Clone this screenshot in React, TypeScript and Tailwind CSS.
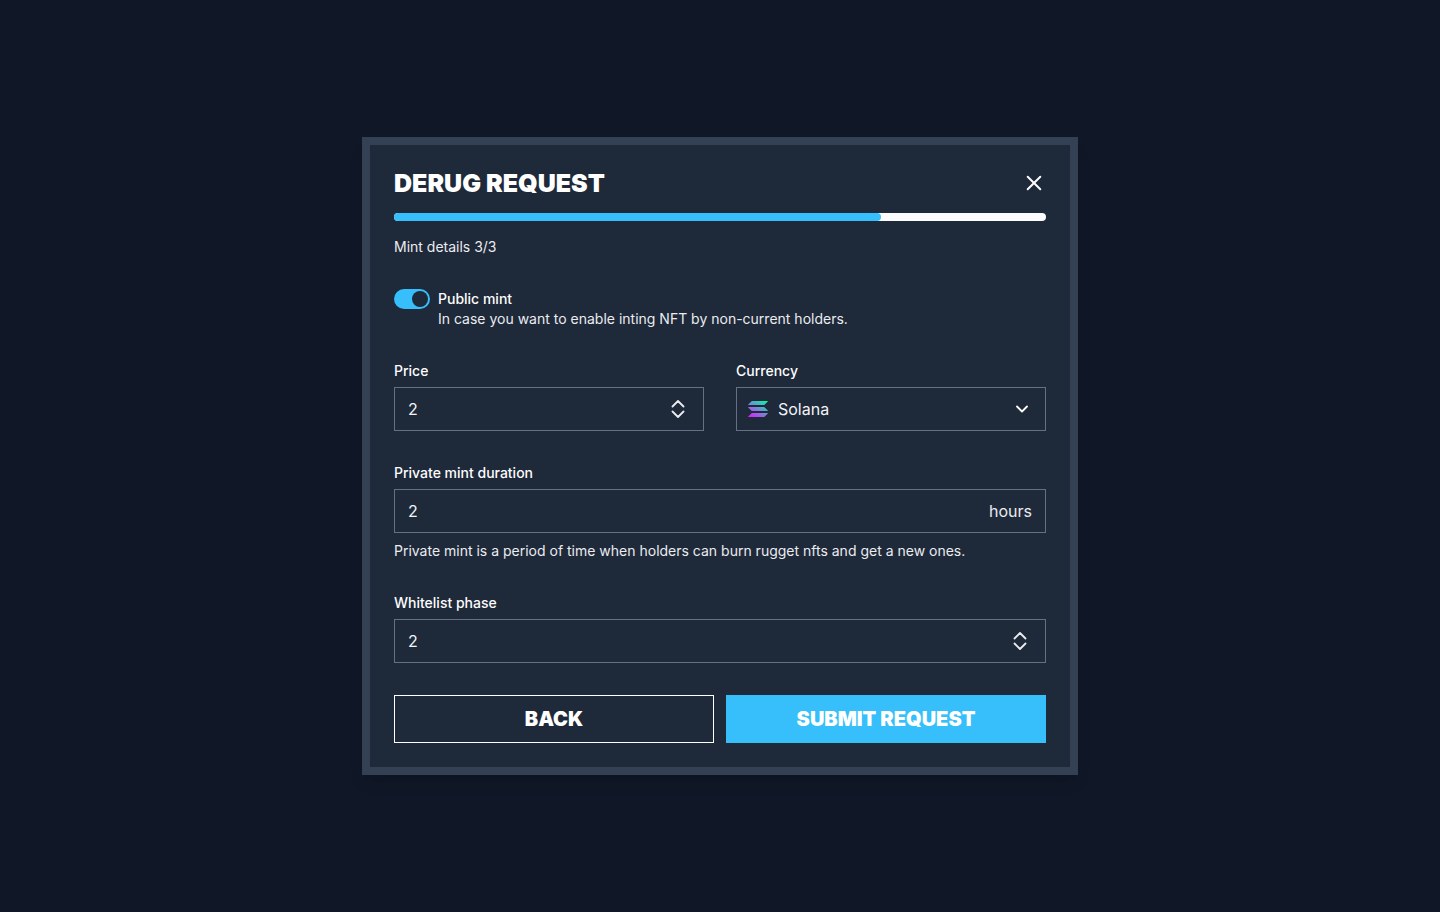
import { useState } from "react"
import type { ReactNode } from "react"
import clsx from "clsx"

function CloseIcon() {
    return (
        <svg width="16" height="16" viewBox="0 0 16 16" fill="none" stroke="currentColor" strokeWidth="2" strokeLinecap="round">
            <path d="M1.700 1.700 14.300 14.300M14.300 1.700 1.700 14.300" />
        </svg>
    )
}

function StepIcon({ up }: { up?: boolean }) {
    return (
        <svg className="block" width="14" height="8" viewBox="0 0 14 8" fill="none" stroke="currentColor" strokeWidth="1.8" strokeLinecap="round" strokeLinejoin="round">
            <path d={up ? "M1.500 6.500 7 1 12.500 6.500" : "M1.500 1.500 7 7 12.500 1.500"} />
        </svg>
    )
}

function ChevronDownIcon() {
    return (
        <svg className="pointer-events-none mr-0.5 shrink-0" width="20" height="20" viewBox="0 0 20 20" fill="none" stroke="currentColor" strokeWidth="1.8" strokeLinecap="round" strokeLinejoin="round">
            <path d="m5 7.500 5 5 5-5" />
        </svg>
    )
}

function SolanaIcon() {
    return (
        <svg className="shrink-0" width="20" height="16" viewBox="0 0 20 16">
            <defs>
                <linearGradient id="solana" gradientUnits="userSpaceOnUse" x1="17" y1="-2" x2="5" y2="18">
                    <stop offset="0" stopColor="#00ffa3" />
                    <stop offset="1" stopColor="#dc1fff" />
                </linearGradient>
            </defs>
            <g fill="url(#solana)">
                <path d="M3.600.2Q3.800 0 4.100 0H19.600Q20.200 0 19.800.4L16.500 3.800Q16.300 4 16 4H.4Q-.2 4 .2 3.600Z" />
                <path d="M16.500 6.200Q16.300 6 16 6H.4Q-.2 6 .2 6.400L3.500 9.800Q3.700 10 4 10H19.600Q20.200 10 19.800 9.600Z" />
                <path d="M3.600 12.200Q3.800 12 4.100 12H19.600Q20.200 12 19.800 12.400L16.500 15.800Q16.300 16 16 16H.4Q-.2 16 .2 15.600Z" />
            </g>
        </svg>
    )
}

interface FieldProps {
    id: string,
    label: string,
    hint?: string,
    children: ReactNode
}

function Field({ id, label, hint, children }: FieldProps) {
    return (
        <div className="flex flex-1 flex-col">
            <label htmlFor={id} className="mb-1.5 text-sm font-medium">{label}</label>
            <div className="flex h-11 items-center border border-[#667085] px-[13px] focus-within:border-[#36bffa]">
                {children}
            </div>
            {hint && <p id={`${id}-hint`} className="mt-2 text-sm text-[#eaecf0]">{hint}</p>}
        </div>
    )
}

interface NumberInputProps {
    id: string,
    value: number,
    onChange: (value: number) => void
}

function NumberInput({ id, value, onChange }: NumberInputProps) {
    return (
        <input
            id={id}
            inputMode="numeric"
            value={value}
            onChange={(e) => onChange(Number(e.target.value) || 0)}
            className="w-full min-w-0 bg-transparent text-base text-[#f2f4f7] outline-none"
        />
    )
}

function Stepper({ label, value, onChange }: { label: string, value: number, onChange: (value: number) => void }) {
    return (
        <div className="mr-[5px] flex flex-col gap-0.5 text-[#eaecf0]">
            <button type="button" aria-label={`Increase ${label}`} onClick={() => onChange(value + 1)}>
                <StepIcon up />
            </button>
            <button type="button" aria-label={`Decrease ${label}`} onClick={() => onChange(Math.max(0, value - 1))}>
                <StepIcon />
            </button>
        </div>
    )
}

const buttonStyle = "h-12 flex-1 border text-xl font-black uppercase text-white"

export default function App() {
    const [publicMint, setPublicMint] = useState(true)
    const [price, setPrice] = useState(2)
    const [duration, setDuration] = useState(2)
    const [whitelist, setWhitelist] = useState(2)
    const progress = 74.7

    return (
        <main className="flex min-h-screen items-center justify-center bg-[#101726] font-['Inter',sans-serif] text-[#fcfcfd]">
            <form
                onSubmit={(e) => e.preventDefault()}
                className="flex w-full max-w-[716px] flex-col gap-8 border-8 border-[#344054] bg-[#1e2939] p-6 shadow-lg"
            >
                <header>
                    <div className="flex h-7 items-center justify-between">
                        <h1 className="text-[25px] leading-7 font-black uppercase text-white">Derug request</h1>
                        <button type="button" aria-label="Close" className="mr-1">
                            <CloseIcon />
                        </button>
                    </div>
                    <div className="mt-4 h-2 rounded-full bg-[#fcfcfd]">
                        <div className="h-full rounded-full bg-[#36bffa]" style={{ width: `${progress}%` }} />
                    </div>
                    <p className="mt-4 text-sm text-[#eaecf0]">Mint details 3/3</p>
                </header>

                <div className="flex gap-2">
                    <input
                        id="public-mint"
                        type="checkbox"
                        role="switch"
                        checked={publicMint}
                        onChange={(e) => setPublicMint(e.target.checked)}
                        className="flex h-5 w-9 shrink-0 appearance-none rounded-full bg-[#667085] p-0.5 before:size-4 before:rounded-full before:bg-[#1e2939] checked:justify-end checked:bg-[#36bffa]"
                    />
                    <div className="text-sm">
                        <label htmlFor="public-mint" className="block font-medium">Public mint</label>
                        <p className="text-[#eaecf0]">In case you want to enable inting NFT by non-current holders.</p>
                    </div>
                </div>

                <div className="flex gap-8">
                    <Field id="price" label="Price">
                        <NumberInput id="price" value={price} onChange={setPrice} />
                        <Stepper label="price" value={price} onChange={setPrice} />
                    </Field>
                    <Field id="currency" label="Currency">
                        <div className="-mx-0.5 flex w-full grow items-center">
                            <SolanaIcon />
                            <select id="currency" className="w-full appearance-none bg-transparent px-2.5 text-base text-[#f2f4f7] outline-none">
                                <option>Solana</option>
                            </select>
                            <ChevronDownIcon />
                        </div>
                    </Field>
                </div>

                <Field
                    id="duration"
                    label="Private mint duration"
                    hint="Private mint is a period of time when holders can burn rugget nfts and get a new ones."
                >
                    <NumberInput id="duration" value={duration} onChange={setDuration} />
                    <span className="text-base text-[#eaecf0]">hours</span>
                </Field>

                <Field id="whitelist" label="Whitelist phase">
                    <NumberInput id="whitelist" value={whitelist} onChange={setWhitelist} />
                    <Stepper label="whitelist phase" value={whitelist} onChange={setWhitelist} />
                </Field>

                <div className="flex gap-3">
                    <button type="button" className={clsx(buttonStyle, "border-white")}>Back</button>
                    <button type="submit" className={clsx(buttonStyle, "border-[#36bffa] bg-[#36bffa]")}>Submit request</button>
                </div>
            </form>
        </main>
    )
}
